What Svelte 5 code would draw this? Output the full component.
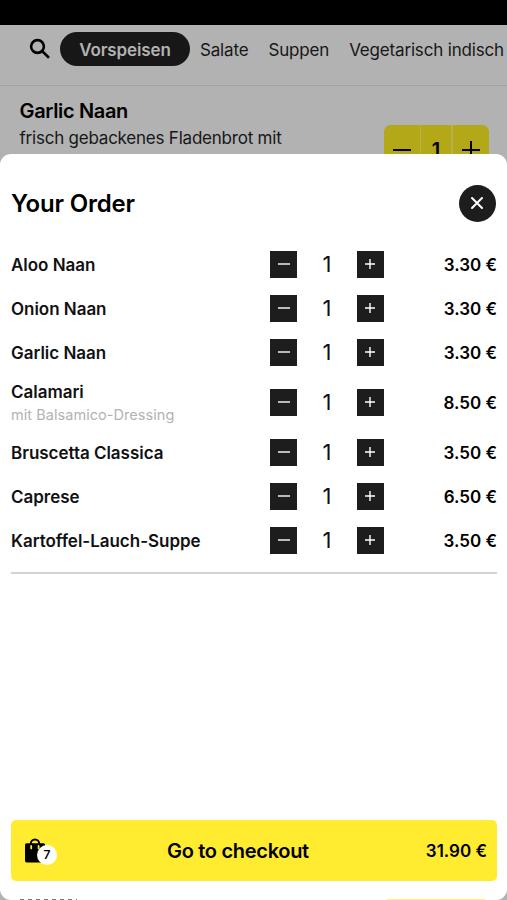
<script>
  const categories = ['Vorspeisen', 'Salate', 'Suppen', 'Vegetarisch indisch'];

  let items = [
    { name: 'Aloo Naan', price: 3.3, amount: 1 },
    { name: 'Onion Naan', price: 3.3, amount: 1 },
    { name: 'Garlic Naan', price: 3.3, amount: 1 },
    { name: 'Calamari', note: 'mit Balsamico-Dressing', price: 8.5, amount: 1 },
    { name: 'Bruscetta Classica', price: 3.5, amount: 1 },
    { name: 'Caprese', price: 6.5, amount: 1 },
    { name: 'Kartoffel-Lauch-Suppe', price: 3.5, amount: 1 }
  ];

  $: count = items.reduce((sum, item) => sum + item.amount, 0);
  $: total = items.reduce((sum, item) => sum + item.amount * item.price, 0);

  function change (item, step) {
    item.amount = Math.max(0, item.amount + step);
    items = items;
  }
</script>

<div class="app">
  <div class="statusbar"></div>

  <main class="menu">
    <nav class="menu__nav">
      <svg class="menu__search" viewBox="0 0 22 22">
        <circle cx="8.5" cy="8.5" r="6.4" />
        <path d="M13 13l7 6.8" />
      </svg>
      {#each categories as category, i}
        <span class="menu__category" class:menu__category--active={i === 0}>{category}</span>
      {/each}
    </nav>
    <article class="dish">
      <div>
        <h3 class="dish__name">Garlic Naan</h3>
        <p class="dish__text">frisch gebackenes Fladenbrot mit</p>
      </div>
      <div class="dish__counter">
        <span><svg viewBox="0 0 20 20"><path d="M1 10h18" /></svg></span>
        <span>1</span>
        <span><svg viewBox="0 0 20 20"><path d="M1 10h18M10 1v18" /></svg></span>
      </div>
    </article>
  </main>

  <section class="order">
    <header class="order__header">
      <h2 class="order__title">Your Order</h2>
      <button class="order__close" aria-label="Close">
        <svg viewBox="0 0 12 12"><path d="M1 1l10 10M11 1L1 11" /></svg>
      </button>
    </header>

    <ul class="order__list">
      {#each items as item}
        <li class="item" class:item--tall={item.note}>
          <div class="item__text">
            <span class="item__name">{item.name}</span>
            {#if item.note}
              <span class="item__note">{item.note}</span>
            {/if}
          </div>
          <div class="item__counter">
            <button class="item__button" aria-label="Less" on:click={() => change(item, -1)}>
              <svg viewBox="0 0 12 12"><path d="M0 6h12" /></svg>
            </button>
            <span class="item__amount">{item.amount}</span>
            <button class="item__button" aria-label="More" on:click={() => change(item, 1)}>
              <svg viewBox="0 0 12 12"><path d="M1 6h10M6 1v10" /></svg>
            </button>
          </div>
          <span class="item__price">{item.price.toFixed(2)} €</span>
        </li>
      {/each}
    </ul>

    <button class="checkout">
      <span class="checkout__bag">
        <svg viewBox="0 0 20 25">
          <path d="M1.5 5.2h17a1.5 1.5 0 0 1 1.5 1.5v16a1.8 1.8 0 0 1-1.8 1.8H1.8A1.8 1.8 0 0 1 0 22.7V6.7a1.5 1.5 0 0 1 1.5-1.5z" />
          <path class="checkout__handle" d="M5.8 6V5.6a4.2 4.2 0 0 1 8.4 0V6" />
          <path class="checkout__holes" d="M6.2 8v2.4M13.6 8v2.4" />
        </svg>
        <span class="checkout__count">{count}</span>
      </span>
      <span class="checkout__label">Go to checkout</span>
      <span class="checkout__total">{total.toFixed(2)} €</span>
    </button>
  </section>

  <!-- top edge of the next dish, just below the sheet -->
  <div class="peek">
    <div class="peek__text"></div>
    <div class="peek__counter"></div>
  </div>
</div>

<style>
  :global(body) {
    background: #b2b2b2;
  }

  .app {
    position: relative;
    height: 900px;
    overflow: hidden;
    background: #b2b2b2;
    color: #000;
    font-family: Inter, "Liberation Sans", sans-serif;
  }

  button {
    padding: 0;
    border: none;
    color: inherit;
    font-family: inherit;
  }

  svg {
    display: block;
    fill: none;
    stroke: currentColor;
  }

  .statusbar {
    height: 25px;
    background: #000;
  }

  .menu__nav {
    display: flex;
    align-items: center;
    box-sizing: border-box;
    height: 61px;
    padding: 0 0 12px 29px;
    border-bottom: 1px solid #a1a1a1;
    white-space: nowrap;
  }

  .menu__search {
    flex: none;
    width: 22px;
    height: 22px;
    margin-right: 9px;
    stroke-width: 2.6;
  }

  .menu__category {
    flex: none;
    margin-right: 20px;
    padding-top: 2px;
    color: #171717;
    font-size: 17px;
    letter-spacing: -0.17px;
  }

  .menu__category--active {
    box-sizing: border-box;
    width: 130px;
    height: 34px;
    margin-right: 10px;
    padding-top: 1px;
    border-radius: 17px;
    background: #171717;
    color: #b2b2b2;
    font-weight: 600;
    line-height: 34px;
    letter-spacing: -0.1px;
    text-align: center;
  }

  .dish {
    display: flex;
    justify-content: space-between;
    padding: 13px 18.5px 0 19.5px;
  }

  .dish__name {
    margin: 0;
    font-size: 20px;
    font-weight: 600;
    line-height: 24px;
    letter-spacing: -0.35px;
  }

  .dish__text {
    margin: 3px 0 0;
    color: #171717;
    font-size: 17px;
    line-height: 24px;
    letter-spacing: -0.22px;
  }

  .dish__counter {
    display: grid;
    grid-template-columns: 36px 30px 36px;
    gap: 1.5px;
    height: 49px;
    margin-top: 26px;
    border-radius: 7px;
    overflow: hidden;
    background: #b7b04c;
    font-size: 20px;
    font-weight: 600;
  }

  .dish__counter span {
    display: flex;
    align-items: center;
    justify-content: center;
    background: #b2a818;
  }

  .dish__counter svg {
    width: 20px;
    height: 20px;
    stroke-width: 2;
  }

  .order {
    position: absolute;
    top: 154px;
    left: 0;
    display: flex;
    flex-direction: column;
    box-sizing: border-box;
    width: 100%;
    height: 746px;
    padding: 30px 10px 19px 11px;
    border-radius: 11px;
    background: #fff;
  }

  .order__header {
    display: flex;
    align-items: center;
    justify-content: space-between;
    height: 38px;
    padding-right: 1px;
  }

  .order__title {
    margin: 0;
    font-size: 24px;
    font-weight: 600;
    letter-spacing: -0.2px;
  }

  .order__close {
    display: flex;
    align-items: center;
    justify-content: center;
    box-sizing: border-box;
    width: 37px;
    height: 37px;
    padding-right: 1px;
    border-radius: 50%;
    background: #1d1d1d;
    color: #fff;
  }

  .order__close svg {
    width: 12px;
    height: 12px;
    stroke-width: 2;
    stroke-linecap: round;
  }

  .order__list {
    margin: 0;
    padding: 20px 0 10px;
    border-bottom: 2px solid #d2d4d4;
    list-style: none;
  }

  .item {
    display: grid;
    grid-template-columns: 259px 114px 1fr;
    align-items: center;
    height: 44px;
  }

  .item--tall {
    height: 56px;
  }

  .item__text {
    display: flex;
    flex-direction: column;
    padding-top: 2px;
    color: #111;
  }

  .item__name {
    font-size: 17px;
    font-weight: 600;
    line-height: 23px;
    letter-spacing: -0.03px;
  }

  .item__note {
    color: #b1b3b6;
    font-size: 14.5px;
    line-height: 22px;
    letter-spacing: 0.05px;
  }

  .item__counter {
    display: flex;
    align-items: center;
    justify-content: space-between;
  }

  .item__button {
    display: flex;
    align-items: center;
    justify-content: center;
    width: 27px;
    height: 27px;
    background: #1d1d1d;
    color: #fff;
  }

  .item__button svg {
    width: 12px;
    height: 12px;
    stroke-width: 1.4;
  }

  .item__amount {
    color: #111;
    font-size: 22px;
    line-height: 27px;
  }

  .item__price {
    padding-top: 2px;
    font-size: 17px;
    font-weight: 600;
    line-height: 23px;
    text-align: right;
  }

  .checkout {
    display: grid;
    grid-template-columns: 142px 1fr 142px;
    align-items: center;
    height: 61px;
    margin-top: auto;
    padding: 0 10px 0 14px;
    border-radius: 5px;
    background: #ffec30;
  }

  .checkout__bag {
    position: relative;
    width: 32px;
  }

  .checkout__bag svg {
    width: 20px;
    height: 25px;
    fill: #000;
    stroke: none;
  }

  .checkout__bag .checkout__handle {
    fill: none;
    stroke: #000;
    stroke-width: 2;
  }

  .checkout__bag .checkout__holes {
    fill: none;
    stroke: #ffec30;
    stroke-width: 1.8;
    stroke-linecap: round;
  }

  .checkout__count {
    position: absolute;
    top: 7px;
    left: 12px;
    width: 20px;
    height: 20px;
    border-radius: 50%;
    background: #fff;
    font-size: 12px;
    font-weight: 600;
    line-height: 20px;
    text-align: center;
  }

  .checkout__label {
    font-size: 20px;
    font-weight: 600;
    letter-spacing: -0.3px;
    text-align: left;
    white-space: nowrap;
  }

  .checkout__total {
    font-size: 17px;
    font-weight: 600;
    text-align: right;
  }

  .peek {
    position: absolute;
    right: 22px;
    bottom: 0;
    left: 20px;
    display: flex;
    align-items: flex-end;
    justify-content: space-between;
    height: 2px;
  }

  .peek__text {
    width: 57px;
    height: 1px;
    background: repeating-linear-gradient(90deg, #777 0 4px, #fff 4px 8px);
  }

  .peek__counter {
    width: 98px;
    height: 1px;
    background: #fff06a;
  }
</style>
